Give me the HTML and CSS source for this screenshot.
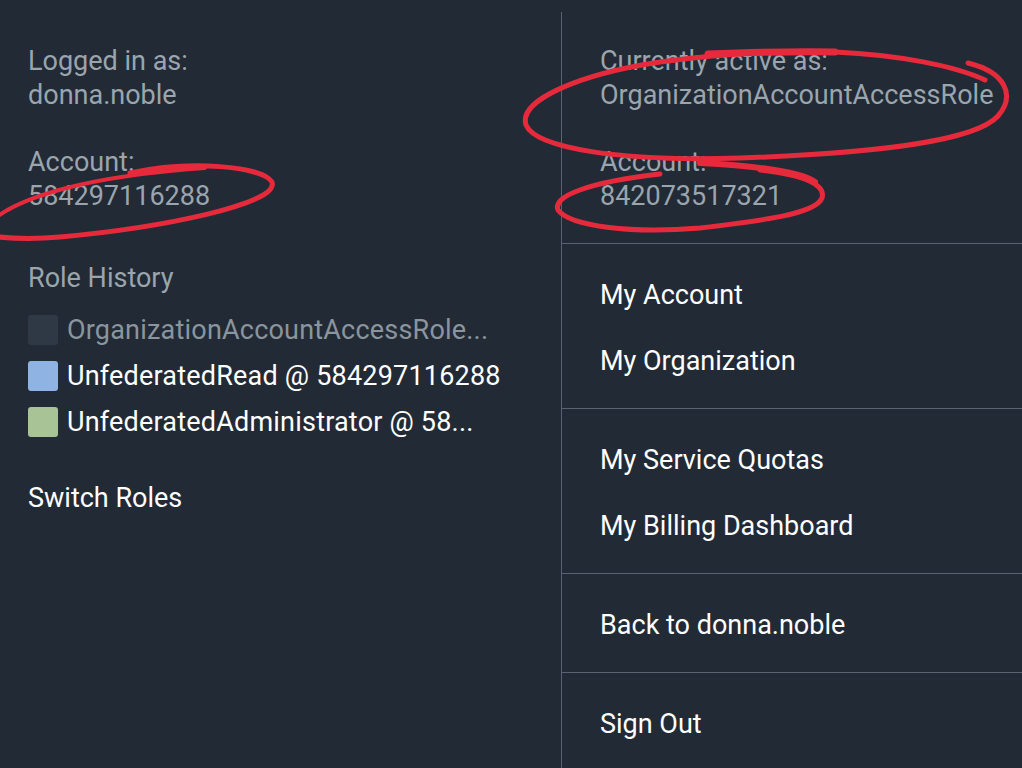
FILE: index.html
```html
<!DOCTYPE html>
<html lang="en">
<head>
<meta charset="utf-8">
<title>Account menu</title>
<link rel="stylesheet" href="styles.css">
</head>
<body>
<div class="menu">
  <div class="col-left">
    <div class="group">
      <div class="label">Logged in as:</div>
      <div class="value">donna.noble</div>
    </div>
    <div class="group">
      <div class="label">Account:</div>
      <div class="value">584297116288</div>
    </div>
    <div class="history-title">Role History</div>
    <ul class="roles">
      <li class="role role-muted"><span class="swatch swatch-dark"></span><span>OrganizationAccountAccessRole...</span></li>
      <li class="role"><span class="swatch swatch-blue"></span><span>UnfederatedRead @ 584297116288</span></li>
      <li class="role"><span class="swatch swatch-green"></span><span>UnfederatedAdministrator @ 58...</span></li>
    </ul>
    <a class="link switch" href="#">Switch Roles</a>
  </div>
  <div class="col-right">
    <div class="section section-info">
      <div class="group">
        <div class="label">Currently active as:</div>
        <div class="value">OrganizationAccountAccessRole</div>
      </div>
      <div class="group">
        <div class="label">Account:</div>
        <div class="value">842073517321</div>
      </div>
    </div>
    <div class="section">
      <a class="link item" href="#">My Account</a>
      <a class="link item" href="#">My Organization</a>
    </div>
    <div class="section">
      <a class="link item" href="#">My Service Quotas</a>
      <a class="link item" href="#">My Billing Dashboard</a>
    </div>
    <div class="section">
      <a class="link item" href="#">Back to donna.noble</a>
    </div>
    <div class="section section-last">
      <a class="link item" href="#">Sign Out</a>
    </div>
  </div>
  <svg class="annotations" viewBox="0 0 1022 768" width="1022" height="768" aria-hidden="true">
    <g fill="none" stroke="#e62a3c" stroke-linecap="round" stroke-linejoin="round">
      <path stroke-width="5" d="M 130 173 C 190 160, 262 166, 272 182 C 280 204, 160 228, 60 237 C 25 240, 5 238, -10 236"/>
      <path stroke-width="4" d="M -10 222 C 20 196, 90 176, 205 168"/>
      <path stroke-width="7" d="M 708 54 C 760 52, 800 51, 835 52"/>
      <path stroke-width="5" d="M 835 52 C 900 55, 955 66, 985 80"/>
      <path stroke-width="5" d="M 968 63 C 1005 72, 1016 95, 998 116 C 975 141, 880 153, 740 158 C 620 162, 536 148, 526 125 C 518 100, 580 74, 660 62 C 710 55, 760 52, 800 52"/>
      <path stroke-width="6" d="M 700 163 C 760 166, 800 172, 815 182"/>
      <path stroke-width="5" d="M 760 170 C 805 175, 826 185, 822 198 C 816 214, 760 221, 700 228 C 630 234, 570 226, 558 210 C 552 196, 590 182, 660 174"/>
    </g>
  </svg>
</div>
</body>
</html>
```

FILE: styles.css
```css
* {
  box-sizing: border-box;
}

html, body {
  margin: 0;
  padding: 0;
  background: #222a36;
}

body {
  font-family: Roboto, "Liberation Sans", sans-serif;
  font-size: 27px;
  line-height: 34px;
  color: #ffffff;
  width: 1022px;
  height: 768px;
  overflow: hidden;
}

.menu {
  position: relative;
  display: grid;
  grid-template-columns: 561px 1fr;
  padding-top: 12px;
  height: 768px;
}

.col-left {
  padding: 32px 0 0 28px;
  display: flex;
  flex-direction: column;
}

.group {
  display: flex;
  flex-direction: column;
}

.group + .group {
  margin-top: 33px;
}

.label,
.value {
  color: #9aa5ad;
  white-space: nowrap;
}

.history-title {
  margin-top: 48px;
  color: #9aa5ad;
}

.roles {
  list-style: none;
  margin: 12px 0 0;
  padding: 0;
}

.role {
  display: flex;
  align-items: center;
  gap: 9px;
  height: 46px;
  line-height: 30px;
  white-space: nowrap;
  letter-spacing: 0.2px;
}

.role-muted {
  color: #8a959d;
}

.swatch {
  flex: none;
  width: 30px;
  height: 30px;
  border-radius: 3px;
}

.swatch-dark {
  background: #2f3845;
}

.swatch-blue {
  background: #8fb3e2;
}

.swatch-green {
  background: #a8c496;
}

.link {
  color: #ffffff;
  text-decoration: none;
  white-space: nowrap;
}

.switch {
  margin-top: 36px;
}

.col-right {
  border-left: 1px solid #59626e;
  display: flex;
  flex-direction: column;
}

.section {
  display: flex;
  flex-direction: column;
  padding: 18px 0 14px 38px;
  border-bottom: 1px solid #59626e;
}

.section-info {
  padding: 32px 0 30px 38px;
}

.section-last {
  border-bottom: none;
}

.item {
  padding: 16px 0;
}

.annotations {
  position: absolute;
  left: 0;
  top: 0;
  pointer-events: none;
}
```
